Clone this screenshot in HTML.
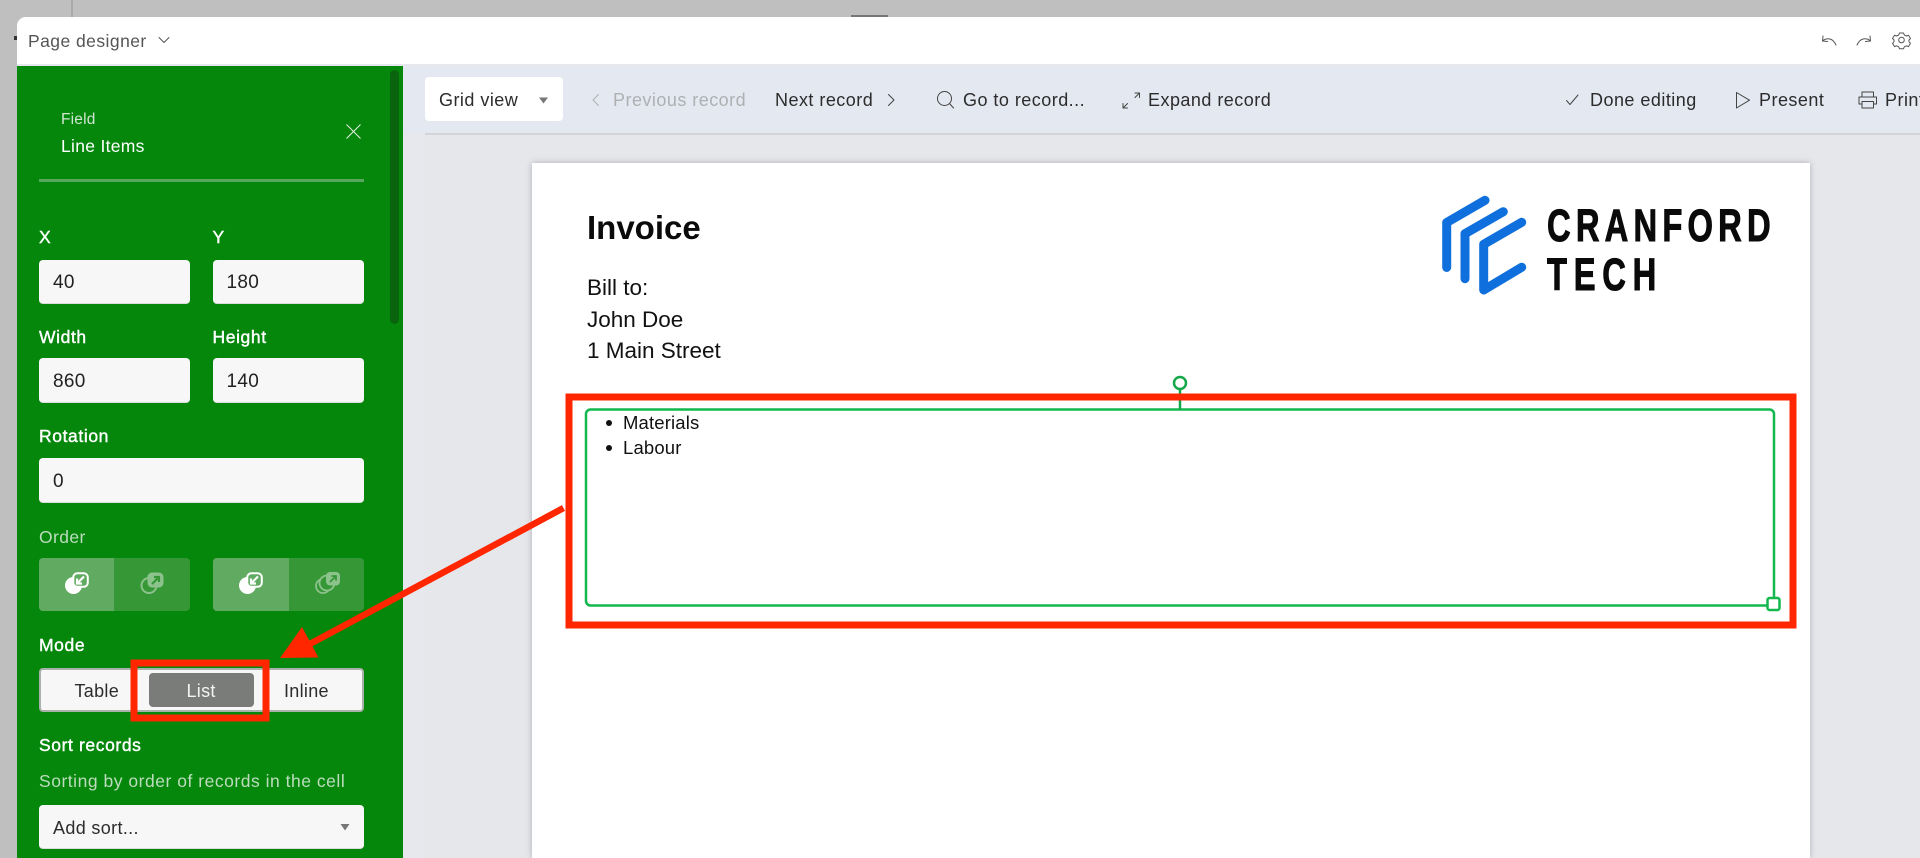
<!DOCTYPE html>
<html><head><meta charset="utf-8"><style>
html,body{margin:0;padding:0;width:1920px;height:858px;overflow:hidden;background:#bfbfbf;font-family:"Liberation Sans",sans-serif}
div{position:absolute;box-sizing:border-box}
.t{white-space:nowrap;line-height:24px;height:24px}
.l{color:#fff;font-size:17.5px;letter-spacing:.6px;left:39px;-webkit-text-stroke:.4px #fff}
.i{background:#f7f7f7;border-radius:4px;height:44px;color:#222;font-size:19px;letter-spacing:.3px;line-height:46px;padding-left:14px;border-bottom:1px solid #dcdcdc}
.h{height:45px;line-height:47px}
.b{font-size:18px;color:#2c2c2c;letter-spacing:.47px}
.m{font-size:18px;letter-spacing:.3px;color:#2c2c2c}
svg{position:absolute;overflow:visible}
.ic{fill:none;stroke:#444;stroke-width:1;stroke-linecap:round;stroke-linejoin:round}
</style></head><body>
<div style="left:71px;top:0;width:2px;height:17px;background:#a9a9a9"></div>
<div style="left:851px;top:15px;width:37px;height:2px;background:#777"></div>
<div style="left:14px;top:36px;width:3px;height:4px;background:#333"></div>

<!-- window -->
<div style="left:17px;top:17px;width:1903px;height:841px;background:#e6e7eb;border-top-left-radius:9px;overflow:hidden">
  <div style="left:0;top:0;width:1903px;height:47px;background:#fff"></div>
  <div style="left:0;top:47px;width:1903px;height:2px;background:#e6e8ee"></div>
  <div style="left:0;top:49px;width:1903px;height:68px;background:#e4e8f1"></div>
  <div style="left:408px;top:116px;width:1495px;height:2px;background:#d2d4d8"></div>
  <div style="left:386px;top:118px;width:22px;height:723px;background:#e6e8ee"></div>
</div>

<div class="t" style="left:28px;top:29px;font-size:17.5px;letter-spacing:.45px;color:#555">Page designer</div>
<svg style="left:0;top:0" width="1920" height="858">
  <path class="ic" style="stroke:#555" d="M159 37.500l5 5 5-5"/>
  <path class="ic" style="stroke:#555" d="M1823 36l-.5 5 5 .5M1823 40.500c4-3 10-2.500 13 4.500"/>
  <path class="ic" style="stroke:#555" d="M1870 36l.5 5-5 .5M1870 40.500c-4-3-10-2.500-13 4.500"/>
  <circle class="ic" style="stroke:#555" cx="1901.500" cy="40" r="2.800"/>
  <path class="ic" style="stroke:#555" d="M1899.500 33h4l.8 2 2.200 1 2-.8 2 3.300-1.500 1.500 0 1.800 1.500 1.500-2 3.300-2-.8-2.200 1-.8 2h-4l-.8-2-2.200-1-2 .8-2-3.300 1.500-1.500 0-1.800-1.500-1.500 2-3.300 2 .8 2.200-1z"/>
</svg>

<!-- sidebar -->
<div style="left:17px;top:66px;width:386px;height:792px;background:#05870c"></div>
<div style="left:390px;top:70px;width:9px;height:254px;background:#0a640e;border-radius:5px"></div>
<div class="t" style="left:61px;top:108px;font-size:15.500px;letter-spacing:.2px;color:#cfe5d0">Field</div>
<div class="t" style="left:61px;top:134px;font-size:17.500px;letter-spacing:.3px;color:#fff">Line Items</div>
<svg style="left:0;top:0" width="1920" height="858"><path d="M346.500 124.500l14 14M360.500 124.500l-14 14" stroke="#e8f3e8" stroke-width="1" fill="none"/></svg>
<div style="left:39px;top:179px;width:325px;height:3px;background:#57a75c"></div>

<div class="t l" style="top:225px">X</div>
<div class="t l" style="top:225px;left:212.500px">Y</div>
<div class="i" style="left:39px;top:260px;width:151px">40</div>
<div class="i" style="left:212.500px;top:260px;width:151.500px">180</div>

<div class="t l" style="top:325px">Width</div>
<div class="t l" style="top:325px;left:212.500px">Height</div>
<div class="i h" style="left:39px;top:358px;width:151px">860</div>
<div class="i h" style="left:212.500px;top:358px;width:151.500px">140</div>

<div class="t l" style="top:424px">Rotation</div>
<div class="i h" style="left:39px;top:458px;width:325px">0</div>

<div class="t" style="left:39px;top:524.500px;font-size:17.500px;letter-spacing:.4px;color:#bcdcbd">Order</div>
<div style="left:39px;top:558px;width:151px;height:53px;background:#369737;border-radius:4px;overflow:hidden"><div style="left:0;top:0;width:75px;height:53px;background:#61aa61"></div></div>
<div style="left:212.500px;top:558px;width:151.500px;height:53px;background:#369737;border-radius:4px;overflow:hidden"><div style="left:0;top:0;width:76px;height:53px;background:#61aa61"></div></div>

<svg style="left:0;top:0" width="1920" height="858">
  <!-- A -->
  <circle cx="73.500" cy="585.500" r="8.500" fill="#fff"/>
  <rect x="73.300" y="573.300" width="14.500" height="13.500" rx="4" fill="#61aa61" stroke="#fff" stroke-width="2"/>
  <path d="M84 576.500l-6.500 6.500M77 578.500v5h5" stroke="#fff" stroke-width="2.200" fill="none"/>
  <!-- B -->
  <circle cx="149" cy="585.500" r="7.500" fill="none" stroke="#8cc28c" stroke-width="2"/>
  <rect x="147.500" y="572.500" width="16" height="15" rx="4.500" fill="#8cc28c"/>
  <path d="M152 584l6.500-6.500M154 577h5v5" stroke="#369737" stroke-width="2.200" fill="none"/>
  <!-- C -->
  <circle cx="247.500" cy="585.500" r="8.500" fill="#fff"/>
  <rect x="247.300" y="573.300" width="14.500" height="13.500" rx="4" fill="#61aa61" stroke="#fff" stroke-width="2"/>
  <path d="M258 576.500l-6.500 6.500M251 578.500v5h5" stroke="#fff" stroke-width="2.200" fill="none"/>
  <!-- D -->
  <circle cx="323" cy="586" r="7" fill="none" stroke="#8cc28c" stroke-width="1.800"/>
  <circle cx="327" cy="583" r="7.500" fill="#369737" stroke="#8cc28c" stroke-width="1.800"/>
  <rect x="326" y="572" width="14" height="13.500" rx="4" fill="#8cc28c"/>
  <path d="M330 582l5.500-5.500M331.500 576h4.500v4.500" stroke="#369737" stroke-width="1.800" fill="none"/>
</svg>

<div class="t l" style="top:633px">Mode</div>
<div style="left:39px;top:668px;width:325px;height:44px;background:#f7f7f7;border:2px solid #aab0aa;border-radius:4px"></div>
<div style="left:149px;top:673px;width:105px;height:34px;background:#7a7c7a;border-radius:4px"></div>
<div class="t m" style="left:74.500px;top:678.500px">Table</div>
<div class="t m" style="left:186.500px;top:678.500px;color:#f3f3f3">List</div>
<div class="t m" style="left:284px;top:678.500px">Inline</div>

<div class="t l" style="top:733px">Sort records</div>
<div class="t" style="left:39px;top:769px;font-size:17.500px;letter-spacing:.52px;color:#bcdcbd">Sorting by order of records in the cell</div>
<div class="i" style="left:39px;top:805px;width:325px;color:#2c2c2c;font-size:18px;letter-spacing:.35px">Add sort...</div>
<svg style="left:0;top:0" width="1920" height="858"><path d="M340.500 824h9l-4.500 6.500z" fill="#777"/></svg>

<!-- toolbar -->
<div style="left:425px;top:77px;width:138px;height:44px;background:#fff;border-radius:4px"></div>
<div class="t b" style="left:439px;top:88px">Grid view</div>
<div class="t b" style="left:613px;top:88px;color:#aeb0b2">Previous record</div>
<div class="t b" style="left:775px;top:88px">Next record</div>
<div class="t b" style="left:963px;top:88px">Go to record...</div>
<div class="t b" style="left:1148px;top:88px">Expand record</div>
<div class="t b" style="left:1590px;top:88px">Done editing</div>
<div class="t b" style="left:1759px;top:88px">Present</div>
<div class="t b" style="left:1885px;top:88px">Print</div>
<svg style="left:0;top:0" width="1920" height="858">
  <path d="M539 97.500h9l-4.500 6z" fill="#777"/>
  <path class="ic" style="stroke:#aeb0b2" d="M598.500 94.500l-5.500 5.500 5.500 5.500"/>
  <path class="ic" d="M888.500 94.500l5.500 5.500-5.500 5.500"/>
  <circle class="ic" cx="944.500" cy="98.500" r="7"/><path class="ic" d="M949.500 103.500l4 4.500"/>
  <path class="ic" d="M1135 93h4.500v4.500M1139.500 93l-4.500 4.500M1123 103.500v4.500h4.500M1123 108l4.500-4.500"/>
  <path class="ic" d="M1566.500 100.500l3.500 4 8-9.500"/>
  <path class="ic" d="M1736.500 92.500v15.500l13-7.800z"/>
  <path class="ic" d="M1862 97v-5h11.500v5M1862 104h-3v-7h17.500v7h-3M1862 101.500h11.500v6.500h-11.500z"/>
</svg>

<!-- page -->
<div style="left:532px;top:163px;width:1278px;height:695px;background:#fff;box-shadow:0 0 6px rgba(70,75,90,.35)"></div>
<div class="t" style="left:587px;top:208px;height:40px;line-height:40px;font-size:33px;font-weight:bold;color:#0a0a0a">Invoice</div>
<div class="t" style="left:587px;top:276px;font-size:22.500px;color:#111">Bill to:</div>
<div class="t" style="left:587px;top:307.500px;font-size:22.500px;color:#111">John Doe</div>
<div class="t" style="left:587px;top:338.500px;font-size:22.500px;color:#111">1 Main Street</div>
<div class="t" style="left:623px;top:411px;font-size:18.500px;letter-spacing:.15px;color:#111">Materials</div>
<div class="t" style="left:623px;top:436px;font-size:18.500px;letter-spacing:.15px;color:#111">Labour</div>

<svg style="left:0;top:0" width="1920" height="858">
  <g fill="none" stroke="#0f6fdc" stroke-width="9" stroke-linecap="round" stroke-linejoin="round">
    <path d="M1485 200.300l-38.300 22.200v45"/>
    <path d="M1503.300 211.700l-38.300 22v45"/>
    <path d="M1521.700 222.300l-38 22v45.700l38-22.700"/>
  </g>
  <text transform="translate(1547,241) scale(.72,1)" font-size="45.500" font-weight="bold" fill="#0a0a0a" stroke="#0a0a0a" stroke-width="1" letter-spacing="7.200" font-family="Liberation Sans">CRANFORD</text>
  <text transform="translate(1547,290) scale(.72,1)" font-size="45.500" font-weight="bold" fill="#0a0a0a" stroke="#0a0a0a" stroke-width="1" letter-spacing="9.300" font-family="Liberation Sans">TECH</text>

  <circle cx="609" cy="423" r="3" fill="#111"/><circle cx="609" cy="448" r="3" fill="#111"/>
  <rect x="586" y="409.500" width="1188" height="196" rx="4.500" fill="none" stroke="#12b84d" stroke-width="2.500"/>
  <path d="M1180 389v21" stroke="#12a84a" stroke-width="2.500"/>
  <circle cx="1180" cy="383" r="6" fill="#fff" stroke="#12a84a" stroke-width="2.500"/>
  <rect x="1767.500" y="598" width="12" height="12" rx="2" fill="#fff" stroke="#12b84d" stroke-width="2.500"/>

  <!-- annotations -->
  <rect x="569" y="397" width="1224" height="228" fill="none" stroke="#ff2600" stroke-width="7"/>
  <rect x="134" y="663" width="132" height="55" fill="none" stroke="#ff2600" stroke-width="7"/>
  <path d="M563.500 508L308 645" stroke="#ff2600" stroke-width="6.500" fill="none"/>
  <path d="M280 658L302 627L318.500 657.500z" fill="#ff2600"/>
</svg>
</body></html>
